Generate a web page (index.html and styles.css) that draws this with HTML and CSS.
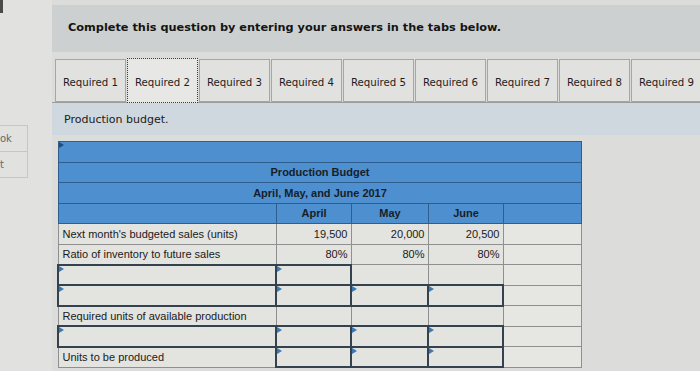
FILE: index.html
```html
<!DOCTYPE html>
<html lang="en">
<head>
<meta charset="utf-8">
<title>Production budget</title>
<link rel="stylesheet" href="styles.css">
</head>
<body>
<div class="page">
  <aside class="sidebar">
    <div class="corner"></div>
    <div class="side-list">
      <div class="side-item">ok</div>
      <div class="side-item">t</div>
    </div>
  </aside>
  <main class="main">
    <header class="instr">
      <h1>Complete this question by entering your answers in the tabs below.</h1>
    </header>
    <nav class="tabs">
      <div class="tab">Required 1</div>
      <div class="tab active">Required 2</div>
      <div class="tab">Required 3</div>
      <div class="tab">Required 4</div>
      <div class="tab">Required 5</div>
      <div class="tab">Required 6</div>
      <div class="tab">Required 7</div>
      <div class="tab">Required 8</div>
      <div class="tab">Required 9</div>
    </nav>
    <section class="panel">Production budget.</section>
    <table class="budget">
      <colgroup>
        <col class="c1"><col class="c2"><col class="c3"><col class="c4"><col class="c5">
      </colgroup>
      <tr class="hd"><td colspan="5" class="flag"></td></tr>
      <tr class="hd"><td colspan="5">Production Budget</td></tr>
      <tr class="hd"><td colspan="5">April, May, and June 2017</td></tr>
      <tr class="hd months"><td></td><td>April</td><td>May</td><td>June</td><td></td></tr>
      <tr><td>Next month's budgeted sales (units)</td><td class="num">19,500</td><td class="num">20,000</td><td class="num">20,500</td><td class="x"></td></tr>
      <tr><td>Ratio of inventory to future sales</td><td class="num">80%</td><td class="num">80%</td><td class="num">80%</td><td class="x"></td></tr>
      <tr><td class="in"></td><td class="in"></td><td></td><td></td><td class="x"></td></tr>
      <tr><td class="in"></td><td class="in"></td><td class="in"></td><td class="in"></td><td class="x"></td></tr>
      <tr><td>Required units of available production</td><td></td><td></td><td></td><td class="x"></td></tr>
      <tr><td class="in"></td><td class="in"></td><td class="in"></td><td class="in"></td><td class="x"></td></tr>
      <tr><td>Units to be produced</td><td class="in"></td><td class="in"></td><td class="in"></td><td class="x"></td></tr>
    </table>
  </main>
</div>
</body>
</html>
```
FILE: styles.css
```css
* { box-sizing: border-box; }
html, body { margin: 0; }
body {
  width: 700px;
  height: 371px;
  overflow: hidden;
  background: #dcdcda;
  font-family: "DejaVu Sans", Verdana, sans-serif;
}
.page { display: flex; height: 371px; }

.sidebar {
  width: 52px;
  flex: none;
  background: #e1e2e0;
  display: flex;
  flex-direction: column;
}
.corner { width: 3px; height: 13px; background: #4a4a4a; }
.side-list { margin-top: 112px; width: 28px; border-top: 1px solid #c6c6c4; }
.side-item {
  height: 26px;
  border-bottom: 1px solid #c6c6c4;
  border-right: 1px solid #c6c6c4;
  font-size: 10px;
  color: #666;
  line-height: 25px;
}

.main {
  flex: 1;
  min-width: 0;
  display: flex;
  flex-direction: column;
  overflow: hidden;
}
.instr {
  margin-top: 5px;
  height: 47px;
  background: #cdd0d0;
  padding: 16px 0 0 16px;
}
.instr h1 {
  margin: 0;
  font-size: 11.3px;
  font-weight: bold;
  line-height: 14px;
  color: #141414;
}

.tabs {
  margin-top: 7px;
  height: 44px;
  display: flex;
  align-items: flex-start;
  padding-left: 3px;
  border-bottom: 1px solid #9c9c9c;
}
.tab {
  flex: none;
  width: 71px;
  height: 43px;
  margin-right: 1px;
  padding-top: 3px;
  border: 1px solid #a6a6a4;
  background: #e1e1df;
  display: flex;
  align-items: center;
  justify-content: center;
  font-size: 10.2px;
  color: #1e1e1e;
  white-space: nowrap;
}
.tab.active {
  height: 45px;
  margin-top: -1px;
  border: 1px dotted #3a3a3a;
  background: #e7e7e5;
}

.panel {
  height: 32px;
  background: #cfd8de;
  padding-left: 12px;
  display: flex;
  align-items: center;
  font-size: 11px;
  color: #1a1a1a;
}

.budget {
  margin: 6px 0 0 5px;
  width: 523px;
  border-collapse: collapse;
  table-layout: fixed;
  font-family: "Liberation Sans", Arial, sans-serif;
  font-size: 11px;
  color: #1a1a1a;
}
.c1 { width: 218px; }
.c2 { width: 75px; }
.c3 { width: 77px; }
.c4 { width: 75px; }
.c5 { width: 78px; }
.budget tr { height: 20.5px; }
.budget td {
  height: 20.5px;
  padding: 0 3px 0 4px;
  background: #e3e3df;
  border: 1px solid #8f8f8f;
  white-space: nowrap;
  overflow: hidden;
}
.budget .hd td {
  background: #4e8fd0;
  border: 1px solid #2f5f8f;
  font-weight: bold;
  text-align: center;
  color: #161e28;
}
.budget .months td + td { border-left-color: #a3bcd6; }
.budget td.num { text-align: right; }
.budget td.x { background: #e6e6e3; }
.budget td.in {
  border: 2px solid #34414e;
  position: relative;
}
.budget td.in::before,
.budget td.flag::before {
  content: "";
  position: absolute;
  left: 0;
  top: 0;
  border-style: solid;
  border-width: 3px 0 3px 5px;
  border-color: transparent transparent transparent #3b78b4;
}
.budget td.flag { position: relative; }
.budget td.flag::before { border-left-color: #1f4f80; }
```
